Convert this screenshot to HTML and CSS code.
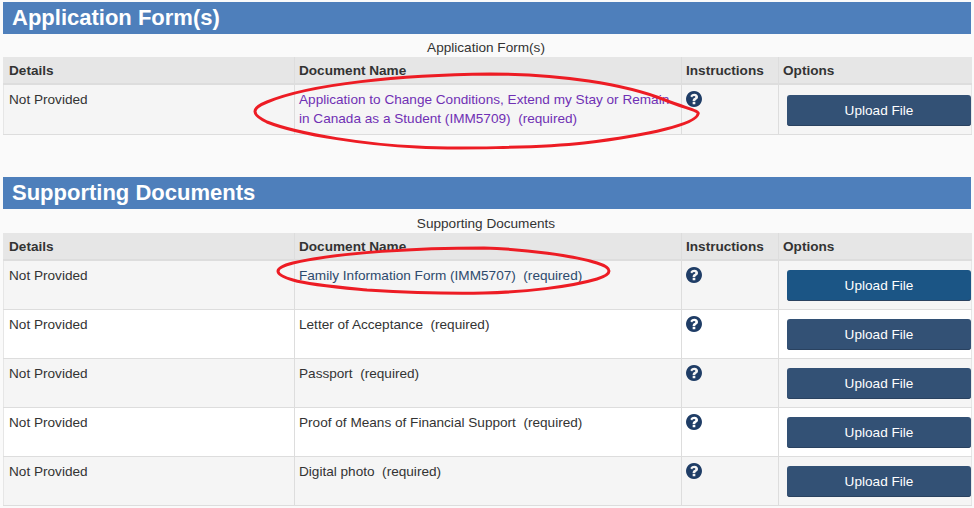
FILE: index.html
```html
<!DOCTYPE html>
<html>
<head>
    <link rel="stylesheet" href="styles.css">
</head>
<body>
    <svg class="icon-defs" width="0" height="0">
        <symbol id="question" viewBox="128 128 1536 1536">
            <path d="M1024 1376v-192q0-14-9-23t-23-9h-192q-14 0-23 9t-9 23v192q0 14 9 23t23 9h192q14 0 23-9t9-23zm256-672q0-88-55.500-163t-138.500-116-170-41q-243 0-371 213-15 24 8 42l132 100q7 6 19 6 16 0 25-12 53-68 86-92 34-24 86-24 48 0 85.500 26t37.500 59q0 38-20 61t-68 45q-63 28-115.500 86.500t-52.500 125.500v36q0 14 9 23t23 9h192q14 0 23-9t9-23q0-19 21.500-49.500t54.500-49.500q32-18 49-28.500t46-35 44.500-48 28-60.500 12.500-81zm384 192q0 209-103 385.500t-279.500 279.500-385.500 103-385.500-103-279.500-279.500-103-385.500 103-385.500 279.500-279.500 385.500-103 385.500 103 279.500 279.500 103 385.500z"/>
        </symbol>
    </svg>

    <section class="doc-section forms">
        <h2 class="section-title">Application Form(s)</h2>
        <table class="doc-table">
            <caption>Application Form(s)</caption>
            <thead>
                <tr>
                    <th class="col-details">Details</th>
                    <th class="col-name">Document Name</th>
                    <th class="col-help">Instructions</th>
                    <th>Options</th>
                </tr>
            </thead>
            <tbody>
                <tr class="striped">
                    <td>Not Provided</td>
                    <td><a class="visited" href="#">Application to Change Conditions, Extend my Stay or Remain in Canada as a Student (IMM5709)&nbsp; (required)</a></td>
                    <td><svg class="help-icon"><use href="#question"></use></svg></td>
                    <td><button class="upload-btn">Upload File</button></td>
                </tr>
            </tbody>
        </table>
    </section>

    <section class="doc-section supporting">
        <h2 class="section-title">Supporting Documents</h2>
        <table class="doc-table">
            <caption>Supporting Documents</caption>
            <thead>
                <tr>
                    <th class="col-details">Details</th>
                    <th class="col-name">Document Name</th>
                    <th class="col-help">Instructions</th>
                    <th>Options</th>
                </tr>
            </thead>
            <tbody>
                <tr class="striped">
                    <td>Not Provided</td>
                    <td><a class="current" href="#">Family Information Form (IMM5707)&nbsp; (required)</a></td>
                    <td><svg class="help-icon"><use href="#question"></use></svg></td>
                    <td><button class="upload-btn active">Upload File</button></td>
                </tr>
                <tr>
                    <td>Not Provided</td>
                    <td>Letter of Acceptance&nbsp; (required)</td>
                    <td><svg class="help-icon"><use href="#question"></use></svg></td>
                    <td><button class="upload-btn">Upload File</button></td>
                </tr>
                <tr class="striped">
                    <td>Not Provided</td>
                    <td>Passport&nbsp; (required)</td>
                    <td><svg class="help-icon"><use href="#question"></use></svg></td>
                    <td><button class="upload-btn">Upload File</button></td>
                </tr>
                <tr>
                    <td>Not Provided</td>
                    <td>Proof of Means of Financial Support&nbsp; (required)</td>
                    <td><svg class="help-icon"><use href="#question"></use></svg></td>
                    <td><button class="upload-btn">Upload File</button></td>
                </tr>
                <tr class="striped">
                    <td>Not Provided</td>
                    <td>Digital photo&nbsp; (required)</td>
                    <td><svg class="help-icon"><use href="#question"></use></svg></td>
                    <td><button class="upload-btn">Upload File</button></td>
                </tr>
            </tbody>
        </table>
    </section>

    <!-- red marker circles drawn over the screenshot -->
    <svg class="markup" width="974" height="508" viewBox="0 0 974 508">
        <path d="M490 74C560 74 625 84 665 100C688 109 700 111 698 114C696 124 650 135 584 143C540 148 450 149 417 147C370 145 300 135 267 122C250 114 252 108 267 102C310 84 400 75 490 74Z"/>
        <path d="M484 248C525 249 575 256 597 263C613 268 613 274 597 279C570 287 525 292 484 293C440 294 400 292 367 290C335 287 310 285 293 280C273 274 273 268 293 263C340 252 420 248 484 248Z"/>
    </svg>
</body>
</html>
```

FILE: styles.css
```css
body {
    font-family: "Liberation Sans", Arial, sans-serif;
    font-size: 13.6px;
    line-height: 19px;
    color: #333;
    background: #fafafa;
    margin: 0;
    padding: 2px 3px 0;
}

.icon-defs {
    position: absolute;
}

.forms {
    margin-bottom: 42px;
}

.section-title {
    margin: 0;
    height: 32px;
    line-height: 32px;
    padding-left: 9px;
    background: #4e7fbb;
    color: #fff;
    font-size: 22px;
    font-weight: bold;
}

.doc-table {
    width: 969px;
    table-layout: fixed;
    border-collapse: collapse;
}

.doc-table caption {
    height: 23px;
    padding-right: 3px;
    line-height: 27px;
    text-align: center;
}

.supporting caption {
    height: 24px;
    line-height: 29px;
}

.doc-table th {
    height: 26px;
    padding: 0 4px;
    text-align: left;
    background: #e6e6e6;
    border-left: 1px solid #ddd;
    border-bottom: 2px solid #ddd;
}

.doc-table td {
    height: 39px;
    padding: 5px 4px 4px;
    vertical-align: top;
    background: #fff;
    border-left: 1px solid #ddd;
    border-bottom: 1px solid #ddd;
}

.forms .doc-table td {
    height: 40px;
}

.doc-table tr.striped td {
    background: #f5f5f5;
}

.doc-table th:first-child,
.doc-table td:first-child {
    padding-left: 5px;
    border-left: 1px solid #e6e6e6;
}

.doc-table th:last-child,
.doc-table td:last-child {
    border-right: 1px solid #e6e6e6;
}

.col-details {
    width: 281px;
}

.col-name {
    width: 378px;
}

.col-help {
    width: 88px;
}

a.visited {
    color: #7030b4;
    text-decoration: none;
}

a.current {
    color: #2d4a6d;
    text-decoration: none;
}

.help-icon {
    display: block;
    width: 16px;
    height: 16px;
    margin-top: 1px;
    fill: #1f3d66;
}

.upload-btn {
    display: block;
    width: 184px;
    height: 31px;
    margin: 4px -6px 0 4px;
    padding: 0;
    border: 0;
    border-radius: 3px;
    background: #335175;
    box-shadow: inset 0 -1px 0 #2a4260;
    color: #fff;
    font-family: inherit;
    font-size: 13.6px;
}

.forms .upload-btn {
    margin-top: 5px;
}

.upload-btn.active {
    background: #1b5585;
}

.markup {
    position: absolute;
    left: 0;
    top: 0;
    pointer-events: none;
}

.markup path {
    fill: none;
    stroke: #ed1c24;
    stroke-width: 3;
}
```
